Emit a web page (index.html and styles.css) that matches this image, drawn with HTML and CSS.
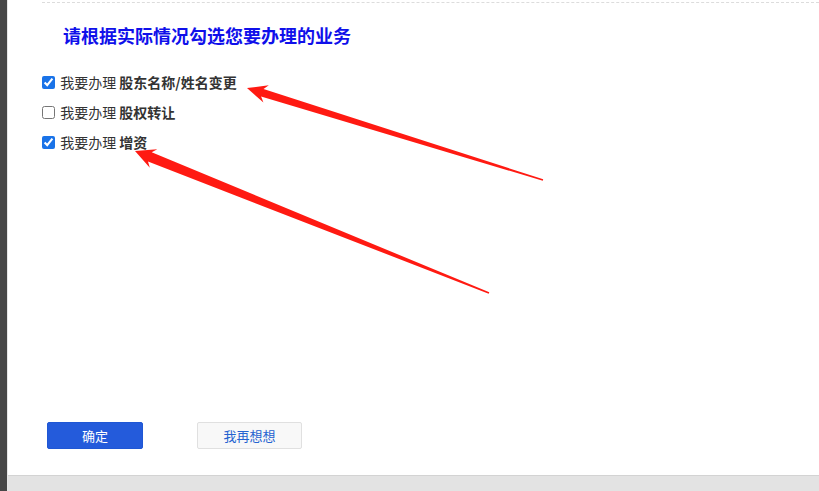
FILE: index.html
```html
<!DOCTYPE html>
<html lang="zh-CN">
<head>
    <meta charset="UTF-8">
    <meta name="viewport" content="width=device-width, initial-scale=1.0">
    <title>业务选择</title>
    <link rel="stylesheet" href="styles.css">
</head>
<body>
    <div class="sidebar"></div>
    <div class="page">
        <div class="content">
            <div class="divider"></div>
            <h2 class="title">请根据实际情况勾选您要办理的业务</h2>
            <ul class="options">
                <li><label><input type="checkbox" checked> 我要办理 <b>股东名称/姓名变更</b></label></li>
                <li><label><input type="checkbox"> 我要办理 <b>股权转让</b></label></li>
                <li><label><input type="checkbox" checked> 我要办理 <b>增资</b></label></li>
            </ul>
            <div class="actions">
                <button class="btn btn-primary">确定</button>
                <button class="btn btn-default">我再想想</button>
            </div>
        </div>
        <div class="footer"></div>
    </div>

    <!-- annotation arrows drawn over the screenshot -->
    <svg class="arrows" width="819" height="491" viewBox="0 0 819 491">
        <polygon points="247,88 263.4,102.5 261.1,96.6 542.8,180.7 543.2,179.3 263.5,88.9 268.8,85.3" />
        <polygon points="135,151 149.8,167.7 148,161.6 488.7,293.7 489.3,292.3 151.7,152.3 157.3,149.2" />
    </svg>
</body>
</html>
```

FILE: styles.css
```css
body {
    margin: 0;
    padding: 0;
    height: 491px;
    display: flex;
    font-family: "Noto Sans CJK SC", "Noto Sans", sans-serif;
    background-color: #fff;
    overflow: hidden;
}
.sidebar {
    width: 7px;
    background-color: #474747;
    border-right: 1px solid #e6e6e6;
}
.page {
    flex: 1;
    display: flex;
    flex-direction: column;
}
.content {
    flex: 1;
    display: flex;
    flex-direction: column;
    padding-left: 34px;
}
.divider {
    margin-top: 2px;
    border-top: 1px dashed #dcdcdc;
}
.title {
    margin: 20px 0 0 0;
    padding-left: 21px;
    font-size: 18px;
    line-height: 24px;
    font-weight: bold;
    color: #1010ea;
}
.options {
    list-style: none;
    margin: 20px 0 0 0;
    padding: 0;
}
.options li {
    height: 30px;
    line-height: 30px;
    font-size: 14px;
    color: #333;
}
.options label {
    display: flex;
    align-items: center;
    white-space: pre;
}
.options input {
    width: 13px;
    height: 13px;
    margin: 0 2px 0 0;
    accent-color: #1a73e8;
}
.options b {
    color: #333;
}
.actions {
    margin-top: auto;
    margin-bottom: 26px;
    padding-left: 5px;
    display: flex;
    gap: 54px;
}
.btn {
    height: 27px;
    font-family: inherit;
    font-size: 13px;
    border-radius: 2px;
    cursor: pointer;
    padding: 0;
}
.btn-primary {
    width: 96px;
    background-color: #245bdb;
    border: 1px solid #1f57d4;
    color: #fff;
}
.btn-default {
    width: 105px;
    background-color: #f8f8f8;
    border: 1px solid #e0e0e0;
    color: #2563d0;
}
.footer {
    height: 15px;
    background-color: #e3e3e3;
    border-top: 1px solid #d3d3d3;
}
.arrows {
    position: absolute;
    left: 0;
    top: 0;
    pointer-events: none;
}
.arrows polygon {
    fill: #ff1a12;
}
```
